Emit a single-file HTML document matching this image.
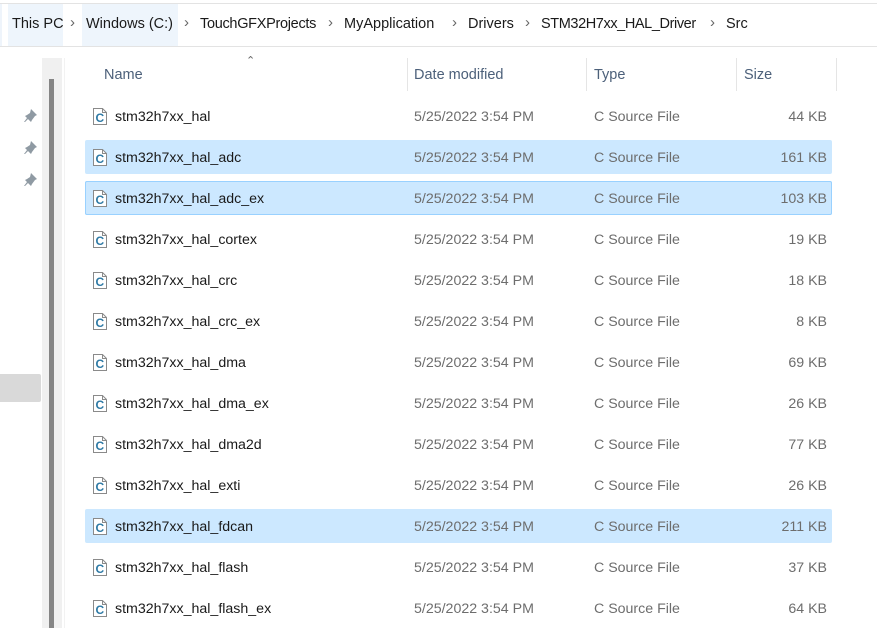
<!DOCTYPE html>
<html><head><style>
*{margin:0;padding:0;box-sizing:border-box}
body{width:877px;height:628px;overflow:hidden;background:#fff;font-family:"Liberation Sans",sans-serif;font-size:14px;color:#1a1a1a;position:relative}
.abs{position:absolute}
.bar{left:0;top:3px;width:877px;height:44px;border-top:1px solid #e3e3e3;border-bottom:1px solid #e3e3e3}
.crumb{top:16px;font-size:14.5px;color:#1a1a1a;white-space:nowrap}
.chev{top:14px;font-size:15px;color:#666}
.hdr{top:67px;color:#4c607a;font-size:14.5px}
.sep{top:58px;width:1px;height:33px;background:#e5e5e5}
.row{left:85px;width:747px;height:34px;position:absolute}
.sel{background:#cce8ff;border-radius:2px}
.selb{background:#cce8ff;box-shadow:inset 0 0 0 1px #99d1ff;border-radius:2px}
.t{position:absolute;top:1px;line-height:34px;white-space:nowrap;font-size:14.2px}
.g{color:#6d6d6d}
.ic{position:absolute;left:8px;top:9px}
</style></head><body>
<div class="abs bar"></div>
<div class="abs" style="left:0;top:4px;width:2px;height:42px;background:#eef4fb"></div>
<div class="abs" style="left:8px;top:4px;width:55px;height:42px;background:#eef5fc"></div>
<div class="abs" style="left:82px;top:4px;width:96px;height:42px;background:#eef5fc"></div>
<div class="abs crumb" style="left:12px">This PC</div>
<div class="abs chev" style="left:70px">›</div>
<div class="abs crumb" style="left:86px">Windows (C:)</div>
<div class="abs chev" style="left:184px">›</div>
<div class="abs crumb" style="left:200px;letter-spacing:-0.3px">TouchGFXProjects</div>
<div class="abs chev" style="left:328px">›</div>
<div class="abs crumb" style="left:344px">MyApplication</div>
<div class="abs chev" style="left:452px">›</div>
<div class="abs crumb" style="left:468px">Drivers</div>
<div class="abs chev" style="left:525px">›</div>
<div class="abs crumb" style="left:541px;letter-spacing:-0.4px">STM32H7xx_HAL_Driver</div>
<div class="abs chev" style="left:710px">›</div>
<div class="abs crumb" style="left:726px">Src</div>

<div class="abs" style="left:42px;top:58px;width:20px;height:570px;background:#f0f0f0"></div>
<div class="abs" style="left:49px;top:79px;width:5px;height:549px;background:#858585"></div>
<div class="abs" style="left:64px;top:58px;width:1px;height:570px;background:#f2f2f2"></div>
<div class="abs" style="left:0;top:374px;width:41px;height:28px;background:#d9d9d9;border-radius:0 2px 2px 0"></div>

<svg class="abs" style="left:22px;top:106px" width="18" height="84" viewBox="0 0 18 84" fill="#8f9aa3">
<g><path d="M9 3l6 6-2 1-3 4-1 2-6-6 2-1 3-2z M5 12l-3 4 1 0 3-3z"/></g>
<g transform="translate(0,32)"><path d="M9 3l6 6-2 1-3 4-1 2-6-6 2-1 3-2z M5 12l-3 4 1 0 3-3z"/></g>
<g transform="translate(0,64)"><path d="M9 3l6 6-2 1-3 4-1 2-6-6 2-1 3-2z M5 12l-3 4 1 0 3-3z"/></g>
</svg>

<div class="abs" style="left:246px;top:54px;font-size:11px;color:#666">&#8963;</div>
<div class="abs hdr" style="left:104px">Name</div>
<div class="abs sep" style="left:407px"></div>
<div class="abs hdr" style="left:414px">Date modified</div>
<div class="abs sep" style="left:586px"></div>
<div class="abs hdr" style="left:594px">Type</div>
<div class="abs sep" style="left:736px"></div>
<div class="abs hdr" style="left:744px">Size</div>
<div class="abs sep" style="left:836px"></div>

<div id="rows"></div>
<script>
var d=[["stm32h7xx_hal","44",""],["stm32h7xx_hal_adc","161","sel"],["stm32h7xx_hal_adc_ex","103","selb"],["stm32h7xx_hal_cortex","19",""],["stm32h7xx_hal_crc","18",""],["stm32h7xx_hal_crc_ex","8",""],["stm32h7xx_hal_dma","69",""],["stm32h7xx_hal_dma_ex","26",""],["stm32h7xx_hal_dma2d","77",""],["stm32h7xx_hal_exti","26",""],["stm32h7xx_hal_fdcan","211","sel"],["stm32h7xx_hal_flash","37",""],["stm32h7xx_hal_flash_ex","64",""]];
var h="";
var icon='<svg class="ic" width="14" height="17" viewBox="0 0 14 17"><path d="M0.5 0.5h9l4 4v12h-13z" fill="#fff" stroke="#8a8a8a"/><path d="M9.5 0.5v4h4" fill="none" stroke="#8a8a8a"/><text x="2.5" y="14" font-family="Liberation Sans" font-weight="bold" font-size="12" fill="#2f7aa5">C</text></svg>';
d.forEach(function(r,i){var top=99+41*i;
h+='<div class="row '+r[2]+'" style="top:'+top+'px">'+icon+'<span class="t" style="left:30px">'+r[0]+'</span><span class="t g" style="left:329px">5/25/2022 3:54 PM</span><span class="t g" style="left:509px">C Source File</span><span class="t g" style="right:5px">'+r[1]+' KB</span></div>';});
document.getElementById("rows").innerHTML=h;
</script>
</body></html>
